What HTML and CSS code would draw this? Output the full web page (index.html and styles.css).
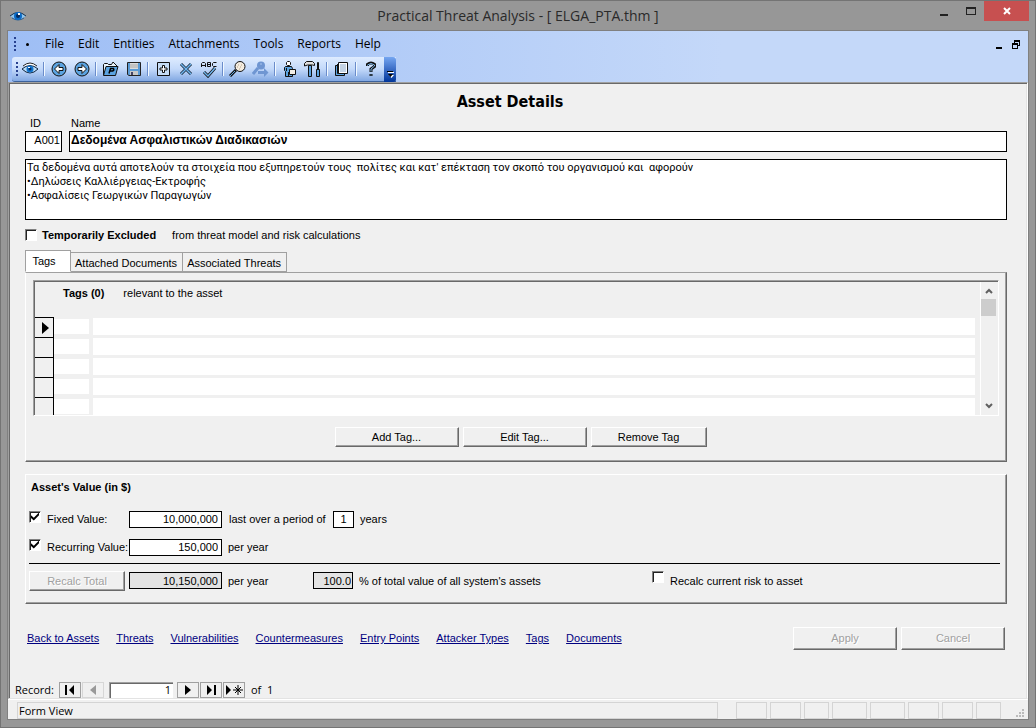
FILE: index.html
```
<!DOCTYPE html>
<html lang="en">
<head>
    <meta charset="UTF-8">
    <meta name="viewport" content="width=device-width, initial-scale=1.0">
    <title>Practical Threat Analysis - [ ELGA_PTA.thm ]</title>
    <link rel="stylesheet" href="styles.css">
</head>
<body>
<div class="window">
    <header class="titlebar">
        <svg class="app-icon" width="16" height="12" viewBox="0 0 16 12"><path d="M0 6 Q8 -1 16 6 Q8 13 0 6z" fill="#8ec4ee"/><path d="M0 6 Q8 -1 16 6" fill="none" stroke="#16324f"/><path d="M2 8 Q8 12 14 8" fill="none" stroke="#2c5f92"/><circle cx="8" cy="6" r="4" fill="#0a6ac6"/><circle cx="8" cy="6" r="2" fill="#042a5c"/><rect x="8" y="3" width="2" height="2" fill="#fff"/></svg>
        <h1>Practical Threat Analysis - [ ELGA_PTA.thm ]</h1>
        <div class="caption-buttons">
            <button type="button" aria-label="Minimize"><svg width="10" height="10"><path d="M1 8h8v2H1z" fill="#222"/></svg></button>
            <button type="button" aria-label="Maximize"><svg width="10" height="8"><path d="M0 0h10v8H0z M1 2v5h8V2z" fill="#222" fill-rule="evenodd"/></svg></button>
            <button type="button" class="close" aria-label="Close"><svg width="8" height="8"><path d="m1 1 6 6M7 1 1 7" stroke="#fff" stroke-width="2"/></svg></button>
        </div>
    </header>

    <div class="client">
        <div class="bars">
            <nav class="menubar">
                <span class="grip"></span>
                <span class="dot"></span>
                <button type="button">File</button>
                <button type="button">Edit</button>
                <button type="button">Entities</button>
                <button type="button">Attachments</button>
                <button type="button">Tools</button>
                <button type="button">Reports</button>
                <button type="button">Help</button>
                <div class="child-buttons">
                    <button type="button" aria-label="Minimize form"><svg width="6" height="9"><path d="M0 7h6v2H0z"/></svg></button>
                    <button type="button" aria-label="Restore form"><svg width="8" height="9"><path d="M2 0h6v6H6V5h1V2H3v1H2z M0 3h6v6H0z M1 5v3h4V5z" fill-rule="evenodd"/></svg></button>
                </div>
            </nav>
            <div class="toolbar">
                <span class="grip"></span>
                <button type="button" aria-label="Home"><svg width="16" height="16" viewBox="0 0 16 16"><path d="M1 5 Q8 -1 15 5" fill="#fff" stroke="#222"/><path d="M0 8 Q8 1 16 8 Q8 16 0 8z" fill="#b9defa" stroke="#10243c"/><circle cx="8" cy="8" r="3.500" fill="#1274ce"/><circle cx="8" cy="8" r="1.500" fill="#052d60"/><path d="M6 6h2v1H6z" fill="#fff"/></svg></button>
                <span class="sep"></span>
                <button type="button" aria-label="Back"><svg width="16" height="16" viewBox="0 0 16 16"><circle cx="8" cy="8" r="7" fill="#5ba3e0" stroke="#111"/><path d="M3.500 8 8 3.500v3h4v3H8v3z" fill="#fff" stroke="#111"/></svg></button>
                <button type="button" aria-label="Forward"><svg width="16" height="16" viewBox="0 0 16 16"><circle cx="8" cy="8" r="7" fill="#5ba3e0" stroke="#111"/><path d="M12.500 8 8 3.500v3H4v3h4v3z" fill="#fff" stroke="#111"/></svg></button>
                <span class="sep"></span>
                <button type="button" aria-label="Open project"><svg width="17" height="16" viewBox="0 0 17 16"><path d="M1.500 14V3.500l1-1h3l1 1h3L11 1l4 4v3" fill="#e8f3fc" stroke="#111"/><path d="M1.500 14.500 4 5.500h12L13.500 14.500z" fill="#5ba3e0" stroke="#111"/><path d="M7 12.500 8.500 7.500h3q1 2-1 2.500H8" fill="none" stroke="#000" stroke-width="1.500"/></svg></button>
                <button type="button" aria-label="Save"><svg width="16" height="16" viewBox="0 0 16 16"><path d="M1.500 1.500h13v13H3l-1.500-1z" fill="#5b9bd5" stroke="#222"/><path d="M4 2h8v6H4z" fill="#dcdcdc"/><path d="M4 4h8M4 6h8" stroke="#aaa"/><path d="M4 10h8v4H4z" fill="#c8c8c8"/><path d="M5 11h2v3H5z" fill="#446"/></svg></button>
                <span class="sep"></span>
                <button type="button" aria-label="New"><svg width="16" height="16" viewBox="0 0 16 16"><path d="M2.500 1.500h12v13h-12z" fill="#c5dcf6" stroke="#111"/><path d="M7.500 4.500h2v2.500h2.500v2h-2.500v2.500h-2v-2.500H5v-2h2.500z" fill="#fff" stroke="#111"/></svg></button>
                <button type="button" aria-label="Delete"><svg width="16" height="16" viewBox="0 0 16 16"><path d="M3 3 13 13M13 3 3 13" stroke="#10202f" stroke-width="3"/><path d="M3 3 13 13M13 3 3 13" stroke="#6fb4ee" stroke-width="1.500"/></svg></button>
                <button type="button" aria-label="Spelling"><svg width="16" height="17" viewBox="0 0 16 17"><path d="M.5 6V2.500l1-1h2l1 1V6M.5 4.500h4M6.500 1.500v4h3v-4zM6.500 3.500h3M15.500 1.500h-3l-1 1v2l1 1h3" fill="none" stroke="#111"/><path d="m3 11 4 4 7-8" fill="none" stroke="#111" stroke-width="3"/><path d="m3 11 4 4 7-8" fill="none" stroke="#6fb4ee" stroke-width="1.500"/></svg></button>
                <span class="sep"></span>
                <button type="button" aria-label="Find"><svg width="17" height="16" viewBox="0 0 17 16"><path d="m1 15 6-6" stroke="#111" stroke-width="3"/><path d="m1 15 5-5" stroke="#5ba3e0"/><circle cx="11" cy="5.500" r="5" fill="#f4ecdf" stroke="#111"/><path d="M9 4h1m2 0h1M8 6h1m2 0h1M10 8h1" stroke="#b8a68c"/></svg></button>
                <button type="button" aria-label="Find next" disabled><svg width="17" height="16" viewBox="0 0 17 16"><circle cx="9" cy="4.500" r="4" fill="#6f96d2"/><path d="m1 13 5-6" stroke="#6f96d2" stroke-width="3"/><path d="M6 10h6V7l4.500 4.500L12 16v-3H6z" fill="#6f96d2"/><path d="M8 3h2" stroke="#a8c4ec"/></svg></button>
                <span class="sep"></span>
                <button type="button" aria-label="Analyst"><svg width="16" height="16" viewBox="0 0 16 16"><path d="M5.500.5h2l1 1v2l-1 1h-2l-1-1v-2z" fill="#fff" stroke="#111"/><path d="M3.500 5.500h6l1 2v8h-7v-5l-1-1v-3z" fill="#5ba3e0" stroke="#111"/><path d="M4.500 7v3M6.500 11v4" stroke="#111"/><path d="M7.500 8.500h6v5h-6z" fill="#f2eee6" stroke="#111"/></svg></button>
                <button type="button" aria-label="Tools"><svg width="17" height="16" viewBox="0 0 17 16"><path d="M.5 5V2.500l2-2h6l2 2v2L8.500 4h-5z" fill="#ddd" stroke="#111"/><path d="M4.500 4.500h3v11h-3z" fill="#5ba3e0" stroke="#111"/><path d="M13.500 1.500h1v7h-1z" fill="#ddd" stroke="#111"/><path d="M12.500 8.500h3v7h-3z" fill="#5ba3e0" stroke="#111"/></svg></button>
                <span class="sep"></span>
                <button type="button" aria-label="Reports"><svg width="16" height="16" viewBox="0 0 16 16"><path d="M1.500 4.500h9v10h-9z" fill="#5ba3e0" stroke="#111"/><path d="M3.500 3v9.500h8" fill="none" stroke="#111"/><path d="M4.500 1.500h9v11h-9z" fill="#fff" stroke="#111"/><path d="M6 4h6M6 6h6M6 8h6M6 10h6" stroke="#8aa8cc"/></svg></button>
                <span class="sep"></span>
                <button type="button" aria-label="Help"><svg width="12" height="16" viewBox="0 0 12 16"><path d="M2.500 5V3.500q3.500-3 7 0v2L6 8v3M6 13v2" fill="none" stroke="#111" stroke-width="3"/><path d="M2.500 4.500v-.5q3.500-3 7 0v1L6 8v2.500M6 13.500v1" fill="none" stroke="#7db8ea"/></svg></button>
                <button type="button" class="overflow" aria-label="Toolbar options"><svg width="8" height="8"><path d="M2 1h6v1H2zM3 4h5L5.500 7z" fill="#fff"/><path d="M1 0h6v1H1zM2 3h5L4.500 6z"/></svg></button>
            </div>
        </div>

        <main class="view">
            <form class="form">
                <h2>Asset Details</h2>

                <div class="identity">
                    <label for="asset-id">ID</label>
                    <label for="asset-name">Name</label>
                    <input type="text" id="asset-id" class="field right" value="A001">
                    <input type="text" id="asset-name" class="field" value="Δεδομένα Ασφαλιστικών Διαδικασιών">
                </div>

                <textarea class="field description" aria-label="Description">Τα δεδομένα αυτά αποτελούν τα στοιχεία που εξυπηρετούν τους  πολίτες και κατ' επέκταση τον σκοπό του οργανισμού και  αφορούν
•Δηλώσεις Καλλιέργειας-Εκτροφής
•Ασφαλίσεις Γεωργικών Παραγωγών</textarea>

                <div class="excluded">
                    <input type="checkbox" id="excluded">
                    <label for="excluded"><b>Temporarily Excluded</b><span>from threat model and risk calculations</span></label>
                </div>

                <div class="tabs">
                    <button type="button" class="active">Tags</button>
                    <button type="button">Attached Documents</button>
                    <button type="button">Associated Threats</button>
                </div>
                <section class="tab-panel">
                    <div class="subform">
                        <div class="subform-body">
                            <div class="subform-head"><b>Tags (0)</b><span>relevant to the asset</span></div>
                            <table class="records">
                                <tr><th><svg width="7" height="12"><path d="M0 0 7 6 0 12z"/></svg></th><td><input type="text" aria-label="Tag number"></td><td><input type="text" aria-label="Tag name"></td></tr>
                                <tr><th></th><td><input type="text" aria-label="Tag number"></td><td><input type="text" aria-label="Tag name"></td></tr>
                                <tr><th></th><td><input type="text" aria-label="Tag number"></td><td><input type="text" aria-label="Tag name"></td></tr>
                                <tr><th></th><td><input type="text" aria-label="Tag number"></td><td><input type="text" aria-label="Tag name"></td></tr>
                                <tr><th></th><td><input type="text" aria-label="Tag number"></td><td><input type="text" aria-label="Tag name"></td></tr>
                            </table>
                        </div>
                        <div class="scrollbar">
                            <button type="button" aria-label="Scroll up"><svg width="8" height="6"><path d="m1 5 3-3 3 3" fill="none" stroke="#606060" stroke-width="2"/></svg></button>
                            <div class="thumb"></div>
                            <button type="button" aria-label="Scroll down"><svg width="8" height="6"><path d="m1 1 3 3 3-3" fill="none" stroke="#606060" stroke-width="2"/></svg></button>
                        </div>
                    </div>
                    <div class="tag-buttons">
                        <button type="button" class="btn">Add Tag...</button>
                        <button type="button" class="btn">Edit Tag...</button>
                        <button type="button" class="btn narrow">Remove Tag</button>
                    </div>
                </section>

                <section class="value-panel">
                    <h3>Asset's Value (in $)</h3>
                    <div class="value-row">
                        <div class="value-label">
                            <input type="checkbox" id="fixed-on" checked>
                            <label for="fixed-on">Fixed Value:</label>
                        </div>
                        <input type="text" class="field amount" value="10,000,000" aria-label="Fixed value">
                        <label class="period" for="period">last over a period of</label>
                        <input type="text" id="period" class="field years" value="1">
                        <span class="unit">years</span>
                    </div>
                    <div class="value-row">
                        <div class="value-label">
                            <input type="checkbox" id="recurring-on" checked>
                            <label for="recurring-on">Recurring Value:</label>
                        </div>
                        <input type="text" class="field amount" value="150,000" aria-label="Recurring value">
                        <span class="unit">per year</span>
                    </div>
                    <hr>
                    <div class="value-row total">
                        <div class="value-label"><button type="button" class="btn" disabled>Recalc Total</button></div>
                        <input type="text" class="field amount" value="10,150,000" aria-label="Total value" readonly>
                        <span class="unit per-year">per year</span>
                        <input type="text" id="percent" class="field percent" value="100.0" readonly>
                        <label class="unit share" for="percent">% of total value of all system's assets</label>
                        <input type="checkbox" id="recalc">
                        <label class="unit" for="recalc">Recalc current risk to asset</label>
                    </div>
                </section>

                <footer class="form-foot">
                    <nav class="links">
                        <a href="#assets">Back to Assets</a>
                        <a href="#threats">Threats</a>
                        <a href="#vulnerabilities">Vulnerabilities</a>
                        <a href="#countermeasures">Countermeasures</a>
                        <a href="#entry-points">Entry Points</a>
                        <a href="#attackers">Attacker Types</a>
                        <a href="#tags">Tags</a>
                        <a href="#documents">Documents</a>
                    </nav>
                    <button type="button" class="btn" disabled>Apply</button>
                    <button type="button" class="btn" disabled>Cancel</button>
                </footer>
            </form>

            <div class="record-nav">
                <label for="record">Record:</label>
                <button type="button" aria-label="First"><svg width="10" height="10"><path d="M0 0h2v10H0zM9 0v10L4 5z"/></svg></button>
                <button type="button" aria-label="Previous" disabled><svg width="6" height="10"><path d="M6 0v10L0 5z" fill="#999"/></svg></button>
                <input type="text" id="record" value="1">
                <button type="button" aria-label="Next"><svg width="6" height="10"><path d="M0 0v10l6-5z"/></svg></button>
                <button type="button" aria-label="Last"><svg width="10" height="10"><path d="M8 0h2v10H8zM1 0v10l5-5z"/></svg></button>
                <button type="button" aria-label="New record"><svg width="17" height="10"><path d="M0 0v10l5-5z"/><path d="M12 0v10M7 5h10M9 2l6 6M15 2 9 8" stroke="#000"/></svg></button>
                <span>of&nbsp; 1</span>
            </div>
        </main>

        <div class="statusbar">
            <div class="status-text">Form View</div>
            <div class="panes"><i></i><i></i><i class="small"></i><i class="large"></i><i class="large"></i><i></i><i></i><i class="small"></i></div>
            <svg class="resize" width="8" height="8"><path d="M6 0h2v2H6zM6 3h2v2H6zM3 3h2v2H3zM6 6h2v2H6zM3 6h2v2H3zM0 6h2v2H0z" fill="#bbb"/></svg>
        </div>
    </div>
</div>
</body>
</html>
```
FILE: styles.css
```
* {
    box-sizing: border-box;
}
body {
    margin: 0;
    font: 11px/14px "Liberation Sans", Arial, sans-serif;
    color: #000;
}
button, input, textarea {
    font: inherit;
    color: inherit;
    margin: 0;
    padding: 0;
    border: 0;
    border-radius: 0;
    background: none;
}
svg {
    display: block;
    flex: none;
}
h1, h2, h3 {
    margin: 0;
}

/* window frame */
.window {
    display: flex;
    flex-direction: column;
    min-height: 100vh;
    padding: 0 6px 7px;
    border: 1px solid #747474;
    background: #979797;
}
.titlebar {
    display: grid;
    grid-template-columns: 133px 1fr 133px;
    align-items: center;
    height: 29px;
}
.app-icon {
    margin-left: 3px;
}
h1 {
    font: 14px/20px "Open Sans", sans-serif;
    color: #2a2a2a;
    text-align: center;
}
.caption-buttons {
    display: flex;
    align-self: start;
    justify-content: flex-end;
}
.caption-buttons button {
    display: flex;
    align-items: center;
    justify-content: center;
    width: 27px;
    height: 20px;
}
.caption-buttons .close {
    width: 45px;
    background: #c75050;
}
.client {
    display: flex;
    flex-direction: column;
    flex: 1;
    border: 1px solid #808080;
    background: #f0f0f0;
}

/* menu and toolbar */
.bars {
    background: linear-gradient(90deg, #9ebef5, #c4d8f9 70%);
}
.menubar {
    display: flex;
    align-items: center;
    height: 26px;
    padding: 0 8px 0 6px;
    font: 12px/16px "Open Sans", sans-serif;
}
.menubar > button {
    padding: 0 7px;
}
.grip {
    width: 2px;
    height: 14px;
    background: repeating-linear-gradient(#27418f 0 2px, transparent 2px 4px);
}
.dot {
    width: 3px;
    height: 3px;
    margin: 0 9px 0 10px;
    border-radius: 2px;
    background: #000;
}
.child-buttons {
    display: flex;
    gap: 10px;
    margin-left: auto;
}
.menubar .child-buttons button {
    padding: 0;
}
.toolbar {
    display: flex;
    align-items: center;
    width: max-content;
    height: 25px;
    margin-left: 4px;
    padding-left: 4px;
    border-bottom: 1px solid #3b619c;
    border-radius: 3px 0 0 3px;
    background: linear-gradient(#dfecff, #c3d9fa 50%, #82a8e2);
}
.toolbar button {
    display: flex;
    align-items: center;
    justify-content: center;
    width: 23px;
    height: 24px;
}
.toolbar .sep {
    width: 2px;
    height: 14px;
    margin: 0 2px;
    border-left: 1px solid #6a8ccb;
    border-right: 1px solid #f1f9ff;
}
.toolbar .overflow {
    align-items: flex-end;
    width: 12px;
    height: 25px;
    margin-left: 2px;
    padding-bottom: 3px;
    border-radius: 0 3px 3px 0;
    background: linear-gradient(#75a6f1, #3a6cc5 50%, #00359a);
}

/* form view */
.view {
    display: flex;
    flex-direction: column;
    flex: 1;
    padding: 1px 1px 0;
    border: 1px solid;
    border-color: #a0a0a0 #fff #e3e3e3 #a0a0a0;
    box-shadow: inset 1px 1px #696969, inset -1px 0 #e3e3e3;
}
.form {
    padding: 8px 19px 12px 15px;
}
h2 {
    margin-right: 12px;
    font: bold 16px/20px "DejaVu Sans Condensed", sans-serif;
    text-align: center;
}
.field {
    border: 1px solid #000;
    background: #fff;
}
.field[readonly] {
    background: #e3e3e3;
}
.right {
    text-align: right;
}
.identity {
    display: grid;
    grid-template-columns: 37px 1fr;
    column-gap: 7px;
    margin-top: 4px;
}
.identity label {
    height: 15px;
    padding-left: 5px;
}
.identity label + label {
    padding-left: 2px;
}
.identity .field {
    width: 100%;
    height: 21px;
    padding: 0 1px 4px;
}
#asset-name {
    font-size: 12px;
    font-weight: bold;
}
.description {
    display: block;
    width: 100%;
    height: 61px;
    margin-top: 7px;
    padding: 1px;
    overflow: hidden;
    resize: none;
    font: 11px/14px Roboto, sans-serif;
}
.excluded {
    display: flex;
    align-items: center;
    gap: 5px;
    height: 30px;
}
.excluded span {
    margin-left: 16px;
}
input[type="checkbox"] {
    appearance: none;
    flex: none;
    display: grid;
    place-content: center;
    width: 12px;
    height: 12px;
    border: 1px solid;
    border-color: #808080 #fff #fff #808080;
    background: #fff;
    box-shadow: inset 1px 1px #222;
}
input[type="checkbox"]:checked::after {
    content: "";
    width: 8px;
    height: 8px;
    background: #000;
    clip-path: polygon(0 35%, 35% 65%, 100% 0, 100% 35%, 35% 100%, 0 70%);
}

/* tabs */
.tabs {
    display: flex;
    align-items: flex-end;
    height: 22px;
}
.tabs button {
    height: 20px;
    padding: 2px 5px 0 4px;
    border: 1px solid #a0a0a0;
    border-left: 0;
    white-space: nowrap;
}
.tabs .active {
    width: 46px;
    height: 22px;
    padding: 0 8px 0 0;
    border-left: 1px solid #a0a0a0;
    border-bottom-color: #fff;
    background: #fff;
}
.tab-panel,
.value-panel {
    border: 1px solid;
    box-shadow: inset -1px -1px #a0a0a0;
}
.tab-panel {
    padding: 7px 7px 14px;
    border-color: #a0a0a0 #696969 #696969 #fff;
}
.subform {
    display: flex;
    padding: 1px 0 0 1px;
    border: 1px solid;
    border-color: #a0a0a0 #fff #fff #a0a0a0;
    box-shadow: inset 1px 1px #696969;
}
.subform-body {
    flex: 1;
    padding-right: 5px;
}
.subform-head {
    height: 35px;
    padding: 4px 0 0 28px;
}
.subform-head span {
    margin-left: 19px;
}
.records {
    width: 100%;
    border-collapse: collapse;
    table-layout: fixed;
}
.records tr {
    height: 20px;
}
.records tr:last-child {
    height: 17px;
}
.records th {
    width: 18px;
    padding: 0 0 0 7px;
    border-top: 1px solid #000;
    border-right: 1px solid #000;
}
.records td {
    padding: 0;
    vertical-align: top;
}
.records td:nth-child(2) {
    width: 40px;
}
.records input {
    display: block;
    width: 100%;
    height: 17px;
    background: #fff;
}
.records td:nth-child(2) input {
    width: 35px;
    height: 15px;
    margin-top: 1px;
}
.scrollbar {
    display: flex;
    flex-direction: column;
    width: 18px;
    padding-right: 1px;
    border-left: 1px solid #fff;
}
.scrollbar button {
    display: flex;
    align-items: center;
    justify-content: center;
    height: 17px;
}
.scrollbar button:last-child {
    margin-top: auto;
}
.thumb {
    height: 17px;
    margin-right: 1px;
    background: #cdcdcd;
}
.tag-buttons {
    display: flex;
    justify-content: center;
    gap: 4px;
    margin: 11px 0 0 9px;
}
.btn {
    width: 124px;
    height: 20px;
    border: 1px solid;
    border-color: #fff #696969 #696969 #fff;
    box-shadow: inset -1px -1px #a0a0a0;
}
.btn.narrow {
    width: 116px;
}
.btn:disabled {
    color: #a0a0a0;
    text-shadow: 1px 1px #fff;
}

/* asset value */
.value-panel {
    margin-top: 12px;
    padding: 5px 6px 12px 3px;
    border-color: #fff #696969 #696969 #fff;
}
h3 {
    margin: 0 0 17px 2px;
    font-size: 11px;
}
.value-row {
    display: flex;
    align-items: center;
    height: 17px;
    white-space: nowrap;
}
.value-row + .value-row {
    margin-top: 11px;
}
.value-row.total {
    height: 20px;
}
.value-label {
    display: flex;
    flex: none;
    align-items: center;
    align-self: stretch;
    gap: 6px;
    width: 100px;
}
.value-label .btn {
    width: 96px;
}
.value-row input[type="checkbox"] {
    align-self: flex-start;
}
.amount {
    width: 93px;
    height: 17px;
    padding-right: 3px;
    text-align: right;
}
.period {
    width: 111px;
    padding-left: 7px;
}
.years {
    width: 21px;
    height: 17px;
    text-align: center;
}
.unit {
    padding-left: 6px;
}
.per-year {
    width: 91px;
}
.percent {
    width: 40px;
    height: 17px;
    padding-right: 1px;
    text-align: right;
}
.share {
    width: 299px;
}
hr {
    height: 1px;
    margin: 7px 0;
    border: 0;
    background: #000;
}

.form-foot {
    display: flex;
    align-items: center;
    gap: 4px;
    margin: 23px 2px 0;
}
.links {
    display: flex;
    gap: 17px;
    margin-right: auto;
}
.links a {
    color: #000080;
}
.form-foot .btn {
    width: 104px;
    height: 23px;
}

/* record navigation */
.record-nav {
    display: flex;
    align-items: center;
    gap: 1px;
    height: 17px;
    margin-top: auto;
    padding-left: 5px;
    font: 11px/16px "Open Sans", sans-serif;
}
.record-nav label {
    width: 43px;
}
.record-nav button {
    display: flex;
    align-items: center;
    justify-content: center;
    width: 22px;
    height: 16px;
    border: 1px solid #a0a0a0;
}
.record-nav button:disabled {
    border-color: #d6d6d6;
}
.record-nav input {
    width: 64px;
    height: 16px;
    margin: 0 3px 0 4px;
    padding-right: 2px;
    border-top: 1px solid #a0a0a0;
    border-left: 1px solid #a0a0a0;
    background: #fff;
    box-shadow: inset 1px 1px #696969;
    text-align: right;
}
.record-nav span {
    margin-left: 5px;
}

/* status bar */
.statusbar {
    display: flex;
    gap: 18px;
    height: 20px;
    padding: 2px 4px 0 9px;
    border-top: 1px solid #fff;
    font: 11px/16px "Open Sans", sans-serif;
}
.status-text {
    flex: 1;
    padding-left: 1px;
    border: 1px solid #d4d4d4;
}
.panes {
    display: flex;
    gap: 3px;
}
.panes i {
    width: 31px;
    border: 1px solid #d4d4d4;
}
.panes .small {
    width: 25px;
}
.panes .large {
    width: 35px;
}
.resize {
    align-self: flex-end;
    margin: 0 0 2px -3px;
}
```
